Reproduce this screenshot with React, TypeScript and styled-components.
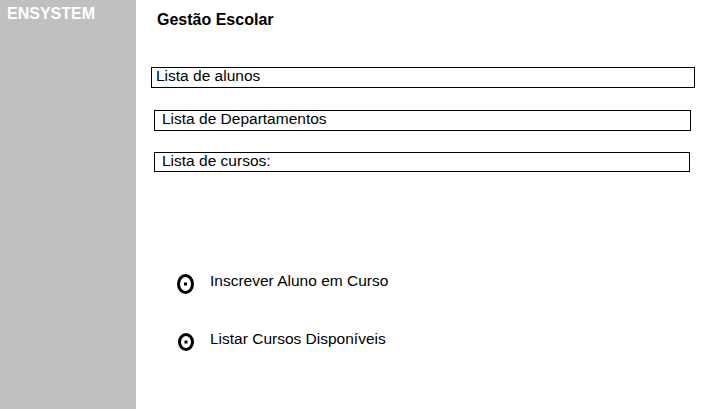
import React from "react";
import styled, { createGlobalStyle } from "styled-components";

const Global = createGlobalStyle`
  html, body { margin: 0; padding: 0; background: #ffffff; }
  body { font-family: "Liberation Sans", Arial, sans-serif; color: #000; }
`;

const Page = styled.div`
  display: flex;
  width: 725px;
  height: 409px;
  overflow: hidden;
  background: #ffffff;
`;

const Sidebar = styled.aside`
  flex: 0 0 136px;
  background: #c0c0c0;
  padding: 5px 0 0 7px;
  box-sizing: border-box;
`;

const Brand = styled.div`
  font-size: 16px;
  line-height: 18px;
  font-weight: bold;
  color: #ffffff;
`;

const Main = styled.main`
  flex: 1;
  display: flex;
  flex-direction: column;
  padding-top: 11px;
`;

const Title = styled.h1`
  margin: 0 0 0 21px;
  font-size: 16px;
  line-height: 18px;
  font-weight: bold;
`;

const Field = styled.div<{ $indent: number; $width: number; $top: number; $pad: number; $height: number }>`
  margin-top: ${(p) => p.$top}px;
  margin-left: ${(p) => p.$indent}px;
  width: ${(p) => p.$width}px;
  height: ${(p) => p.$height}px;
  box-sizing: border-box;
  border: 1px solid #000;
  padding-left: ${(p) => p.$pad}px;
  font-size: 15.5px;
  line-height: 16px;
`;

const Options = styled.div`
  display: flex;
  flex-direction: column;
  gap: 36px;
  margin-top: 100px;
`;

const Option = styled.div<{ $indent: number; $dotTop: number }>`
  display: flex;
  align-items: flex-start;
  padding-left: ${(p) => p.$indent}px;
  font-size: 15.5px;
  line-height: 18px;
  svg {
    margin-top: ${(p) => p.$dotTop}px;
    flex: none;
  }
`;

const Label = styled.span<{ $gap: number }>`
  margin-left: ${(p) => p.$gap}px;
`;

function RadioMark({ w, h }: { w: number; h: number }) {
  return (
    <svg width={w} height={h} viewBox={`0 0 ${w} ${h}`}>
      <ellipse cx={w / 2} cy={h / 2} rx={w / 2 - 1.5} ry={h / 2 - 1.5} fill="none" stroke="#000" strokeWidth={3} />
      <rect x={w / 2 - 1.5} y={h / 2 - 1.5} width={3} height={3} fill="#000" />
    </svg>
  );
}

export default function App() {
  return (
    <>
      <Global />
      <Page>
        <Sidebar>
          <Brand>ENSYSTEM</Brand>
        </Sidebar>
        <Main>
          <Title>Gestão Escolar</Title>
          <Field $top={38} $indent={15} $width={544} $pad={4} $height={21}>Lista de alunos</Field>
          <Field $top={22} $indent={18} $width={537} $pad={7} $height={21}>Lista de Departamentos</Field>
          <Field $top={21} $indent={18} $width={536} $pad={7} $height={20}>Lista de cursos:</Field>
          <Options>
            <Option $indent={41} $dotTop={2}>
              <RadioMark w={17} h={20} />
              <Label $gap={16}>Inscrever Aluno em Curso</Label>
            </Option>
            <Option $indent={42} $dotTop={3}>
              <RadioMark w={16} h={18} />
              <Label $gap={16}>Listar Cursos Disponíveis</Label>
            </Option>
          </Options>
        </Main>
      </Page>
    </>
  );
}
